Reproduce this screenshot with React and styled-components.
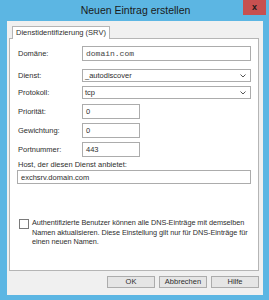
import styled, { createGlobalStyle } from "styled-components";

const Global = createGlobalStyle`
  html, body { margin: 0; padding: 0; }
  body {
    width: 269px;
    height: 300px;
    overflow: hidden;
    font-family: "Liberation Sans", Arial, sans-serif;
    font-size: 8px;
    color: #2e2e2e;
  }
`;

export default function App() {
  return (
    <>
      <Global />
      <Frame>
        <TitleBar>
          <span />
          <Title>Neuen Eintrag erstellen</Title>
          <CloseButton>x</CloseButton>
        </TitleBar>
        <Client>
          <TabStrip>
            <Tab>Dienstidentifizierung (SRV)</Tab>
          </TabStrip>
          <Panel>
            <FieldRow $mb={8}>
              <Label>Domäne:</Label>
              <TextBox $h={15} $mono>domain.com</TextBox>
            </FieldRow>
            <FieldRow $mb={4}>
              <Label>Dienst:</Label>
              <Select>
                <span>_autodiscover</span>
                <Chevron />
              </Select>
            </FieldRow>
            <FieldRow $mb={5}>
              <Label>Protokoll:</Label>
              <Select>
                <span>tcp</span>
                <Chevron />
              </Select>
            </FieldRow>
            <FieldRow $mb={4}>
              <Label>Priorität:</Label>
              <TextBox $h={15} $w={58}>0</TextBox>
            </FieldRow>
            <FieldRow $mb={4}>
              <Label>Gewichtung:</Label>
              <TextBox $h={15} $w={58}>0</TextBox>
            </FieldRow>
            <FieldRow $mb={2}>
              <Label>Portnummer:</Label>
              <TextBox $h={15} $w={58}>443</TextBox>
            </FieldRow>
            <HostLabel>Host, der diesen Dienst anbietet:</HostLabel>
            <TextBox $h={14}>exchsrv.domain.com</TextBox>
            <CheckRow>
              <CheckBox />
              <CheckText>
                Authentifizierte Benutzer können alle DNS-Einträge mit demselben
                Namen aktualisieren. Diese Einstellung gilt nur für DNS-Einträge für
                einen neuen Namen.
              </CheckText>
            </CheckRow>
          </Panel>
          <ButtonRow>
            <Button>OK</Button>
            <Button>Abbrechen</Button>
            <Button>Hilfe</Button>
          </ButtonRow>
        </Client>
      </Frame>
    </>
  );
}

function Chevron() {
  return (
    <svg width="6" height="4" viewBox="0 0 6 4">
      <path d="M0.5 0.5 L3 3 L5.5 0.5" fill="none" stroke="#555" strokeWidth="1" />
    </svg>
  );
}

const Frame = styled.div`
  width: 269px;
  height: 300px;
  background: #5cb6e3;
  display: flex;
  flex-direction: column;
  box-sizing: border-box;
  padding: 0 6px 5px 7px;
`;

const TitleBar = styled.div`
  height: 21px;
  flex: none;
  display: grid;
  grid-template-columns: 23px 1fr 23px;
  align-items: start;
  margin-right: -3px;
`;

const Title = styled.div`
  text-align: center;
  font-size: 10.5px;
  line-height: 21px;
  color: #1a1a1a;
  padding-right: 2px;
`;

const CloseButton = styled.div`
  height: 15px;
  background: #c75050;
  color: #1a1a1a;
  font-weight: bold;
  font-size: 9px;
  line-height: 14px;
  text-align: center;
`;

const Client = styled.div`
  flex: 1;
  background: #f0f0f0;
  display: flex;
  flex-direction: column;
  padding: 4px 4px 0 2px;
`;

const TabStrip = styled.div`
  display: flex;
  padding-left: 3px;
  height: 13px;
`;

const Tab = styled.div`
  background: #fff;
  border: 1px solid #b5b5b5;
  border-bottom: none;
  padding: 0 3px;
  line-height: 12px;
  font-size: 7.5px;
  position: relative;
  top: 1px;
`;

const Panel = styled.div`
  background: #fff;
  border: 1px solid #b5b5b5;
  height: 233px;
  box-sizing: border-box;
  padding: 7px 7px 0 7px;
  display: flex;
  flex-direction: column;
`;

const FieldRow = styled.div`
  display: grid;
  grid-template-columns: 65px 1fr;
  align-items: center;
  margin-bottom: ${(p) => p.$mb}px;
`;

const Label = styled.div`
  padding-left: 1px;
  font-size: 7.5px;
`;

const TextBox = styled.div`
  box-sizing: border-box;
  height: ${(p) => p.$h}px;
  width: ${(p) => (p.$w ? `${p.$w}px` : "auto")};
  border: 1px solid #acacac;
  background: #fff;
  padding-left: 3px;
  display: flex;
  align-items: center;
  font-family: ${(p) => (p.$mono ? '"Liberation Mono", monospace' : "inherit")};
  font-size: ${(p) => (p.$mono ? "8px" : "7.5px")};
  color: ${(p) => (p.$mono ? "#444" : "inherit")};
`;

const Select = styled.div`
  box-sizing: border-box;
  height: 13px;
  border: 1px solid #acacac;
  background: #fff;
  padding: 0 4px 0 2px;
  display: flex;
  align-items: center;
  justify-content: space-between;
  font-size: 7.5px;
`;

const HostLabel = styled.div`
  font-size: 7.5px;
  line-height: 11px;
  padding-left: 1px;
`;

const CheckRow = styled.div`
  display: flex;
  align-items: flex-start;
  gap: 3px;
  margin-top: 34px;
  padding-left: 2px;
`;

const CheckBox = styled.div`
  width: 8px;
  height: 8px;
  border: 1px solid #7a7a7a;
  background: #fff;
  flex: none;
  margin-top: 1px;
`;

const CheckText = styled.div`
  font-size: 7.3px;
  line-height: 9.5px;
  letter-spacing: -0.05px;
`;

const ButtonRow = styled.div`
  display: flex;
  justify-content: flex-end;
  gap: 4px;
  margin-top: 5px;
`;

const Button = styled.div`
  width: 48px;
  height: 12px;
  box-sizing: border-box;
  border: 1px solid #acacac;
  background: #e5e5e5;
  text-align: center;
  font-size: 7.5px;
  line-height: 10px;
`;
